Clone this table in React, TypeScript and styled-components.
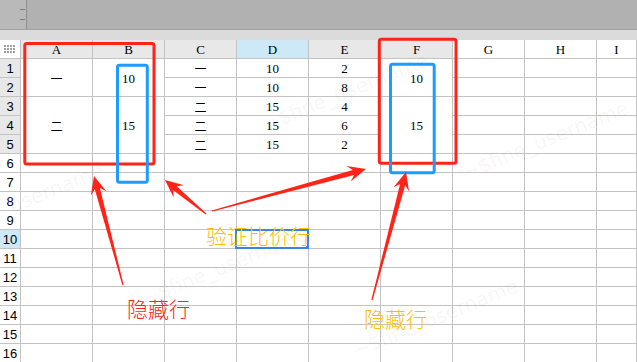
import React from "react";
import styled, { createGlobalStyle } from "styled-components";

const GlobalStyle = createGlobalStyle`
  html, body {
    margin: 0;
    padding: 0;
    background: #ffffff;
    overflow: hidden;
  }
`;

const Page = styled.div`
  position: relative;
  width: 637px;
  height: 362px;
  overflow: hidden;
  display: flex;
  flex-direction: column;
  background: #ffffff;
`;

const TopBar = styled.div`
  height: 30px;
  flex: none;
  display: flex;
  background: #b1b1b1;
  border-bottom: 1px solid #a2a2a2;
  box-sizing: border-box;
`;

const Dock = styled.div`
  width: 27px;
  border-right: 1px solid #8e8e8e;
  background: #b9b9b9;
  box-sizing: border-box;
  display: flex;
  flex-direction: column;
  align-items: flex-end;
  gap: 9px;
  padding: 9px 1px 0 0;
`;

const Tick = styled.span`
  width: 5px;
  height: 1px;
  background: #7d7d7d;
`;

const SubBar = styled.div`
  height: 10px;
  flex: none;
  background: #dbdbdb;
`;

const Sheet = styled.div`
  display: grid;
  grid-template-columns: 21px repeat(8, 72px) 1fr;
  grid-auto-rows: 19px;
`;

const Cell = styled.div<{ $span?: number; $bg?: string }>`
  position: relative;
  grid-row: span ${(p) => p.$span ?? 1};
  box-sizing: border-box;
  border-right: 1px solid #c3c3c3;
  border-bottom: 1px solid #c3c3c3;
  background: ${(p) => p.$bg ?? "#ffffff"};
  display: flex;
  align-items: center;
  justify-content: center;
  padding-top: 2px;
  font-family: "Liberation Serif", "Noto Sans CJK SC", serif;
  font-size: 13px;
  color: #000000;
`;

const ColHead = styled(Cell)`
  padding-top: 1px;
`;

const RowHead = styled(Cell)`
  font-family: "Liberation Sans", sans-serif;
  font-size: 13px;
  padding-top: 1px;
`;

const Han = styled.span`
  font-family: "Noto Sans CJK SC", sans-serif;
  font-size: 12px;
  line-height: 1;
`;

const Selection = styled.div`
  position: absolute;
  left: -2px;
  top: -1px;
  right: -1px;
  bottom: -1px;
  border: 2px solid #3a84e4;
`;

const Handle = styled.span`
  position: absolute;
  right: -4px;
  bottom: -4px;
  width: 5px;
  height: 5px;
  background: #3a84e4;
`;

const Overlay = styled.svg`
  position: absolute;
  left: 0;
  top: 0;
  pointer-events: none;
`;

const Note = styled.div<{ $x: number; $y: number; $color: string }>`
  position: absolute;
  left: ${(p) => p.$x}px;
  top: ${(p) => p.$y}px;
  font-family: "Noto Sans CJK SC", sans-serif;
  font-size: 21px;
  line-height: 21px;
  font-weight: 300;
  color: ${(p) => p.$color};
  white-space: nowrap;
`;

const Watermark = styled.div<{ $x: number; $y: number }>`
  position: absolute;
  left: ${(p) => p.$x}px;
  top: ${(p) => p.$y}px;
  transform: translate(-50%, -50%) rotate(-22deg);
  font-family: "DejaVu Sans", sans-serif;
  font-size: 20px;
  color: rgba(0, 0, 0, 0.05);
  white-space: nowrap;
  pointer-events: none;
`;

const GRAY = "#e8e8e8";
const BLUE = "#cde9f7";

const columns = ["A", "B", "C", "D", "E", "F", "G", "H", "I"];
const colBg = (c: string) =>
  c === "D" ? BLUE : ["G", "H", "I"].includes(c) ? "#ffffff" : GRAY;

const rowsCDE: [string, string, string][] = [
  ["一", "10", "2"],
  ["一", "10", "8"],
  ["二", "15", "4"],
  ["二", "15", "6"],
  ["二", "15", "2"],
];

const arrowPoints = (tx: number, ty: number, hx: number, hy: number) => {
  const len = Math.hypot(hx - tx, hy - ty);
  const ux = (hx - tx) / len;
  const uy = (hy - ty) / len;
  const nx = -uy;
  const ny = ux;
  const at = (back: number, side: number) =>
    `${(hx - ux * back + nx * side).toFixed(1)},${(hy - uy * back + ny * side).toFixed(1)}`;
  return [
    at(len, 0.6),
    at(13, 2.6),
    at(18, 8),
    at(0, 0),
    at(18, -8),
    at(13, -2.6),
    at(len, -0.6),
  ].join(" ");
};

const arrows = [
  [123, 285, 94, 176],
  [206, 214, 165, 180],
  [212, 211, 366, 169],
  [372, 300, 406, 172],
];

const Mark = ({ x, y, text = "~$fine_username" }: { x: number; y: number; text?: string }) => (
  <Watermark $x={x} $y={y}>{text}</Watermark>
);

export default function App() {
  const body: React.ReactNode[] = [];
  for (let r = 1; r <= 16; r++) {
    const head = r === 10 ? BLUE : r <= 5 ? GRAY : "#ffffff";
    body.push(
      <RowHead key={`h${r}`} $bg={head}>
        {r}
      </RowHead>
    );
    if (r === 1 || r === 3) {
      const span = r === 1 ? 2 : 3;
      body.push(
        <Cell key={`a${r}`} $span={span}>
          <Han>{r === 1 ? "一" : "二"}</Han>
        </Cell>,
        <Cell key={`b${r}`} $span={span}>
          {r === 1 ? "10" : "15"}
        </Cell>
      );
    } else if (r > 5) {
      body.push(<Cell key={`a${r}`} />, <Cell key={`b${r}`} />);
    }
    if (r <= 5) {
      const [c, d, e] = rowsCDE[r - 1];
      body.push(
        <Cell key={`c${r}`}>
          <Han>{c}</Han>
        </Cell>,
        <Cell key={`d${r}`}>{d}</Cell>,
        <Cell key={`e${r}`}>{e}</Cell>
      );
    } else {
      body.push(
        <Cell key={`c${r}`} />,
        <Cell key={`d${r}`}>
          {r === 10 && (
            <Selection>
              <Handle />
            </Selection>
          )}
        </Cell>,
        <Cell key={`e${r}`} />
      );
    }
    if (r === 1 || r === 3) {
      body.push(
        <Cell key={`f${r}`} $span={r === 1 ? 2 : 3}>
          {r === 1 ? "10" : "15"}
        </Cell>
      );
    } else if (r > 5) {
      body.push(<Cell key={`f${r}`} />);
    }
    body.push(<Cell key={`g${r}`} />, <Cell key={`hh${r}`} />, <Cell key={`i${r}`} />);
  }

  return (
    <Page>
      <GlobalStyle />
      <TopBar>
        <Dock>
          <Tick />
          <Tick />
        </Dock>
      </TopBar>
      <SubBar />
      <Sheet>
        <ColHead $bg="#ffffff">
          <svg width="12" height="9" viewBox="0 0 12 9">
            {[0, 1, 2].map((y) =>
              [0, 1, 2, 3].map((x) => (
                <rect key={`${x}${y}`} x={x * 3} y={y * 3} width="2" height="2" fill="#a0a0a0" />
              ))
            )}
          </svg>
        </ColHead>
        {columns.map((c) => (
          <ColHead key={c} $bg={colBg(c)}>
            {c}
          </ColHead>
        ))}
        {body}
      </Sheet>

      <Mark x={345} y={92} />
      <Mark x={545} y={140} />
      <Mark x={225} y={266} />
      <Mark x={435} y={318} />
      <Mark x={56} y={188} text="username" />

      <Overlay width="637" height="362" viewBox="0 0 637 362">
        <rect x="24.8" y="43.5" width="129.2" height="120.5" rx="2" fill="none" stroke="#ff2318" strokeWidth="3" />
        <rect x="379.3" y="39.3" width="76.7" height="123.9" rx="2" fill="none" stroke="#ff2318" strokeWidth="3" />
        <rect x="117.5" y="65.3" width="29.8" height="117" rx="2" fill="none" stroke="#1c9cff" strokeWidth="3" />
        <rect x="390.5" y="64.2" width="43.7" height="108.6" rx="2" fill="none" stroke="#1c9cff" strokeWidth="3" />
        {arrows.map(([tx, ty, hx, hy], i) => (
          <polygon key={i} points={arrowPoints(tx, ty, hx, hy)} fill="#ff2318" />
        ))}
      </Overlay>

      <Note $x={206} $y={225} $color="#ffbf00">验证比价行</Note>
      <Note $x={127} $y={298} $color="#ff2318">隐藏行</Note>
      <Note $x={364} $y={308} $color="#ffbf00">隐藏行</Note>
    </Page>
  );
}
